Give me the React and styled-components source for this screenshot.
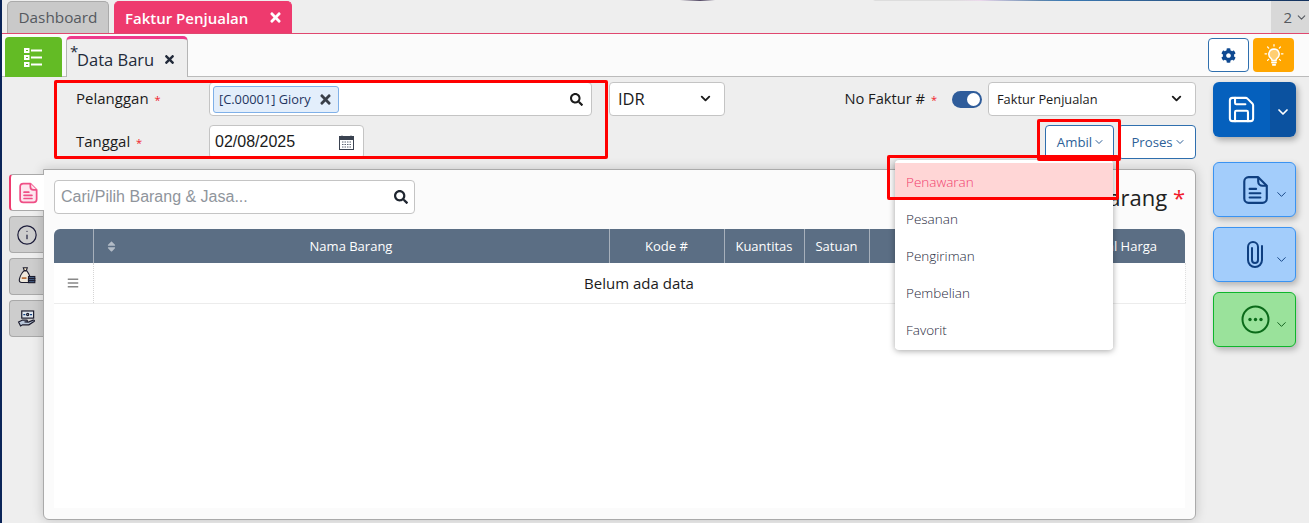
import { createGlobalStyle, styled } from 'styled-components'
import { ChevronDown, Info, Save } from 'lucide-react'
import { FaBars, FaCog, FaSearch, FaSort, FaTimes } from 'react-icons/fa'

const MENU_ITEMS = ['Penawaran', 'Pesanan', 'Pengiriman', 'Pembelian', 'Favorit']

const ListIcon = () => (
  <svg width="22" height="22" viewBox="0 0 22 22" fill="none" stroke="#fff" strokeWidth="2">
    <rect x="2" y="3" width="3.5" height="3" />
    <rect x="2" y="10" width="3.5" height="3" />
    <rect x="2" y="17" width="3.5" height="3" />
    <path d="M8 4.5h11M8 11.5h11M8 18.5h11" />
  </svg>
)

const BulbIcon = () => (
  <svg width="22" height="24" viewBox="0 0 22 24" fill="none" stroke="#fff" strokeWidth="1.2" strokeLinecap="round">
    <path d="M11 6a5.2 5.2 0 0 0-3 9.4c.7.6 1 1.3 1 2.1h4c0-.8.3-1.5 1-2.1A5.2 5.2 0 0 0 11 6z" fill="rgba(255,255,255,0.45)" strokeWidth="1.5" />
    <path d="M9 19.5h4M9.8 21.8h2.4" strokeWidth="1.8" />
    <path d="M11 1.5v1.6M4.6 4l1.1 1.1M17.4 4l-1.1 1.1M2 10.8h1.6M18.4 10.8H20M4.6 17.4l1-1M17.4 17.4l-1-1" />
  </svg>
)

const CalendarIcon = () => (
  <svg width="15" height="15" viewBox="0 0 15 15" fill="none">
    <rect x="0.5" y="1.5" width="14" height="13" fill="#fff" stroke="#3a4250" />
    <rect x="0.5" y="1.5" width="14" height="3.5" fill="#3a4250" />
    <path d="M3 0.5v2M12 0.5v2" stroke="#3a4250" />
    <path d="M3 7h9M3 9.5h9M3 12h9" stroke="#5a6270" strokeDasharray="1.5 1" />
  </svg>
)

const DocIcon = ({ size, color, fill, width }) => (
  <svg width={size} height={size} viewBox="0 0 28 28" fill={fill} stroke={color} strokeWidth={width} strokeLinejoin="round">
    <path d="M8 2h9l8 8v12a4 4 0 0 1-4 4H8a4 4 0 0 1-4-4V6a4 4 0 0 1 4-4z" />
    <path d="M17 2v4a4 4 0 0 0 4 4h4" />
    <path d="M9 13h6M9 17h10M9 21h10" strokeLinecap="round" />
  </svg>
)

const ClipIcon = () => (
  <svg width="18" height="29" viewBox="0 0 18 29" fill="none" stroke="#0f3f80" strokeWidth="2" strokeLinecap="round">
    <path d="M16 6v14a7 7 0 0 1-14 0V7a5 5 0 0 1 10 0v13a3 3 0 0 1-6 0V8" />
  </svg>
)

const DotsIcon = () => (
  <svg width="29" height="29" viewBox="0 0 29 29" fill="none">
    <circle cx="14.5" cy="14.5" r="13" stroke="#0b6b1a" strokeWidth="2" />
    <circle cx="9" cy="14.5" r="1.7" fill="#0b6b1a" />
    <circle cx="14.5" cy="14.5" r="1.7" fill="#0b6b1a" />
    <circle cx="20" cy="14.5" r="1.7" fill="#0b6b1a" />
  </svg>
)

const BagIcon = () => (
  <svg width="19" height="21" viewBox="0 0 24 26" fill="none" stroke="#1c1c2e" strokeWidth="1.4">
    <path d="M8 2h5l-1.2 3.5H9.2z" fill="#f6e7c8" />
    <path d="M8.6 6h4L15 10c1.5 1.5 1 5 1 7v3.5H6c-2.5 0-3.5-1.5-3-4 .5-2.5 3-8.5 5.6-10.5z" fill="#efe9dc" />
    <rect x="14.5" y="13" width="8" height="2.6" fill="#46628a" />
    <rect x="14.5" y="15.6" width="8" height="2.6" fill="#46628a" />
    <rect x="14.5" y="18.2" width="8" height="2.6" fill="#46628a" />
    <path d="M6 15h6" stroke="#b0622a" strokeWidth="2" />
  </svg>
)

const HandIcon = () => (
  <svg width="19" height="19" viewBox="0 0 24 24" fill="none" stroke="#1c1c2e" strokeWidth="1.5">
    <rect x="6" y="2.5" width="15" height="9" fill="#dfe6ee" />
    <path d="M8 7h2.5M16.5 7H19" stroke="#0f3f80" />
    <circle cx="13.5" cy="7" r="1.4" fill="#9aa9bc" />
    <path d="M2 16.5l5-2.5h5c1.5 0 1.5 2.2 0 2.2H9.5l5 .3 6-2.5c1.5-.4 2 1 1 1.7L15 20H7l-2.500 1.500z" fill="#b9c7da" />
  </svg>
)

const App = () => (
  <Page>
    <GlobalStyle />

    <TabBar>
      <AppTab>Dashboard</AppTab>
      <AppTab $active>
        Faktur Penjualan
        <FaTimes size={15} />
      </AppTab>
      <TabCount>
        2
        <ChevronDown size={13} />
      </TabCount>
    </TabBar>

    <SubBar>
      <ListButton>
        <ListIcon />
      </ListButton>
      <DocTab>
        <DocStar>*</DocStar>
        Data Baru
        <FaTimes size={13} />
      </DocTab>
      <SubActions>
        <GearButton>
          <FaCog size={15} />
        </GearButton>
        <BulbButton>
          <BulbIcon />
        </BulbButton>
      </SubActions>
    </SubBar>

    <Main>
      <Content>
        <FormArea>
          <FormRow>
            <FieldLabel>
              Pelanggan <LabelStar>*</LabelStar>
            </FieldLabel>
            <CustomerInput>
              <Tag>
                [C.00001] Giory
                <FaTimes size={15} />
              </Tag>
              <FaSearch size={13} />
            </CustomerInput>
            <CurrencySelect>
              IDR
              <ChevronDown size={15} strokeWidth={3} />
            </CurrencySelect>
            <NumberLabel>
              No Faktur # <LabelStar>*</LabelStar>
            </NumberLabel>
            <Toggle />
            <TypeSelect>
              Faktur Penjualan
              <ChevronDown size={15} strokeWidth={3} />
            </TypeSelect>
          </FormRow>
          <FormRow>
            <FieldLabel>
              Tanggal <LabelStar>*</LabelStar>
            </FieldLabel>
            <DateInput>
              02/08/2025
              <CalendarIcon />
            </DateInput>
            <RowButtons>
              <MenuAnchor>
                <OutlineButton $wide={69}>
                  Ambil
                  <ChevronDown size={12} />
                </OutlineButton>
                <Menu>
                  {MENU_ITEMS.map((item, idx) => (
                    <MenuItem key={item} $active={idx === 0}>
                      {item}
                    </MenuItem>
                  ))}
                </Menu>
              </MenuAnchor>
              <OutlineButton $wide={78}>
                Proses
                <ChevronDown size={12} />
              </OutlineButton>
            </RowButtons>
          </FormRow>
        </FormArea>

        <PanelZone>
          <SideTabs>
            <SideTab $active>
              <DocIcon size={22} color="#ef4f86" fill="#fde6ef" width={2.2} />
            </SideTab>
            <SideTab>
              <Info size={22} color="#1c1c3a" strokeWidth={1.3} />
            </SideTab>
            <SideTab>
              <BagIcon />
            </SideTab>
            <SideTab>
              <HandIcon />
            </SideTab>
          </SideTabs>

          <Panel>
            <PanelHead>
              <ItemSearch>
                Cari/Pilih Barang &amp; Jasa...
                <FaSearch size={14} />
              </ItemSearch>
              <PanelTitle>
                Barang <Required>*</Required>
              </PanelTitle>
            </PanelHead>
            <TableArea>
              <ItemTable>
                <colgroup>
                  <col width="39" />
                  <col width="516" />
                  <col width="115" />
                  <col width="80" />
                  <col width="65" />
                  <col width="166" />
                  <col width="150" />
                </colgroup>
                <thead>
                  <tr>
                    <HeadCell />
                    <HeadCell>
                      <SortMark>
                        <FaSort size={13} />
                      </SortMark>
                      Nama Barang
                    </HeadCell>
                    <HeadCell>Kode #</HeadCell>
                    <HeadCell>Kuantitas</HeadCell>
                    <HeadCell>Satuan</HeadCell>
                    <HeadCell />
                    <HeadCell>Total Harga</HeadCell>
                  </tr>
                </thead>
                <tbody>
                  <tr>
                    <GripCell>
                      <FaBars size={12} />
                    </GripCell>
                    <EmptyCell colSpan={6}>Belum ada data</EmptyCell>
                  </tr>
                </tbody>
              </ItemTable>
            </TableArea>
          </Panel>
        </PanelZone>
      </Content>

      <ActionColumn>
        <SaveButton>
          <SaveMain>
            <Save size={31} strokeWidth={1.6} />
          </SaveMain>
          <SaveCaret>
            <ChevronDown size={16} strokeWidth={2.6} />
          </SaveCaret>
        </SaveButton>
        <ActionStack>
          <ActionButton>
            <DocIcon size={30} color="#0f3f80" fill="none" width={2} />
            <ActionCaret color="#0f3f80" />
          </ActionButton>
          <ActionButton>
            <ClipIcon />
            <ActionCaret color="#0f3f80" />
          </ActionButton>
          <ActionButton $green>
            <DotsIcon />
            <ActionCaret color="#0b5a18" />
          </ActionButton>
        </ActionStack>
      </ActionColumn>
    </Main>

    <FormFrame />
    <AmbilFrame />
    <MenuFrame />
  </Page>
)

export default App

const GlobalStyle = createGlobalStyle`
  html,
  body {
    margin: 0;
    overflow: hidden;
  }

  * {
    box-sizing: border-box;
  }
`

const Page = styled.div`
  position: relative;
  width: 1309px;
  height: 523px;
  overflow: hidden;
  background: #eee;
  border-left: 2px solid #0a2458;
  font-family: 'Open Sans', 'Liberation Sans', sans-serif;
  color: #1b1b1b;
`

const TabBar = styled.div`
  display: flex;
  align-items: flex-end;
  height: 34px;
  padding-left: 5px;
  border-bottom: 1px solid #e0476f;
  background:
    linear-gradient(
        90deg,
        transparent 678px,
        #554a66 698px,
        transparent 713px,
        transparent 871px,
        #ddd 873px,
        #ddd 953px,
        #ecd9ec 978px,
        #5f86ad 1038px,
        #3a7ab5 1063px,
        #35699d 1118px,
        #12305c 1307px
      )
      top / 100% 1px no-repeat,
    #eee;
`

const AppTab = styled.div`
  display: flex;
  align-items: center;
  justify-content: ${(p) => (p.$active ? 'flex-start' : 'center')};
  gap: 20px;
  width: ${(p) => (p.$active ? '178px' : '102px')};
  height: 32px;
  margin-right: 5px;
  padding: ${(p) => (p.$active ? '0 0 0 10px' : '0 0 2px')};
  border: 1px solid ${(p) => (p.$active ? '#ee3a6e' : '#aaa')};
  border-bottom: 0;
  border-radius: 5px 5px 0 0;
  background: ${(p) => (p.$active ? '#ee3a6e' : '#c9c9c9')};
  color: ${(p) => (p.$active ? '#fff' : '#55595f')};
  font-size: ${(p) => (p.$active ? '15px' : '15.3px')};
  font-weight: ${(p) => (p.$active ? 600 : 400)};
`

const TabCount = styled.div`
  display: flex;
  align-items: center;
  justify-content: flex-end;
  gap: 3px;
  width: 38px;
  height: 32px;
  margin-left: auto;
  padding-right: 1px;
  background: #d8d8d8;
  color: #55595f;
  font-size: 15px;
`

const SubBar = styled.div`
  display: flex;
  align-items: flex-end;
  height: 43px;
  padding-left: 3px;
  border-bottom: 1px solid #bbb;
  background: #fbfbfb;
`

const ListButton = styled.div`
  display: flex;
  align-items: center;
  justify-content: center;
  width: 57px;
  height: 40px;
  margin-bottom: -1px;
  border-radius: 4px 4px 0 0;
  background: #63bb25;
`

const DocTab = styled.div`
  position: relative;
  display: flex;
  align-items: center;
  gap: 9px;
  width: 122px;
  height: 41px;
  margin-bottom: -1px;
  margin-left: 4px;
  padding: 2px 0 0 10px;
  border: 1px solid #b5b5b5;
  border-top: 3px solid #ee3a8c;
  border-bottom: 0;
  border-radius: 5px 5px 0 0;
  background: #eee;
  font-size: 16.5px;
  color: #222a3a;
`

const DocStar = styled.span`
  position: absolute;
  top: 2px;
  left: 3px;
  font-size: 15px;
`

const SubActions = styled.div`
  display: flex;
  align-self: flex-start;
  gap: 4px;
  margin: 4px 15px 0 auto;
`

const GearButton = styled.div`
  display: flex;
  align-items: center;
  justify-content: center;
  width: 41px;
  height: 34px;
  border: 1px solid #2f6fae;
  border-radius: 4px;
  background: #fff;
  color: #0f4a92;
`

const BulbButton = styled.div`
  display: flex;
  align-items: center;
  justify-content: center;
  width: 41px;
  height: 34px;
  border-radius: 4px;
  background: #ffa600;
`

const Main = styled.div`
  display: flex;
`

const Content = styled.div`
  display: flex;
  flex-direction: column;
  width: 1194px;
`

const FormArea = styled.div`
  display: flex;
  flex-direction: column;
  gap: 9px;
  height: 92px;
  padding: 5px 0 0 74px;
`

const FormRow = styled.div`
  display: flex;
  align-items: center;
  height: 34px;
`

const FieldLabel = styled.div`
  width: 133px;
  padding-bottom: 2px;
  font-size: 15px;
`

const Required = styled.span`
  color: #f01c2c;
`

const LabelStar = styled(Required)`
  margin-left: 2px;
  font-size: 11px;
`

const CustomerInput = styled.div`
  display: flex;
  align-items: center;
  justify-content: space-between;
  width: 383px;
  height: 34px;
  padding: 0 8px 0 3px;
  border: 1px solid #c4c4c4;
  border-radius: 4px;
  background: #fff;
`

const Tag = styled.div`
  display: flex;
  align-items: center;
  gap: 7px;
  height: 27px;
  padding: 0 5px;
  border: 1px solid #7fb0e8;
  border-radius: 3px;
  background: #e3eefb;
  color: #1f3560;
  font-size: 12.8px;

  svg {
    color: #3a3f48;
  }
`

const SelectBox = styled.div`
  display: flex;
  align-items: center;
  justify-content: space-between;
  height: 34px;
  padding-bottom: 1px;
  border: 1px solid #c4c4c4;
  border-radius: 4px;
  background: #fff;
`

const CurrencySelect = styled(SelectBox)`
  width: 116px;
  margin-left: 17px;
  padding: 0 11px 1px 8px;
  font-size: 16.5px;
`

const NumberLabel = styled.div`
  margin-left: auto;
  padding-bottom: 2px;
  font-size: 14.7px;
`

const Toggle = styled.div`
  position: relative;
  width: 30px;
  height: 17px;
  margin: 0 6px 0 15px;
  border-radius: 9px;
  background: #2f5c9a;

  &::after {
    content: '';
    position: absolute;
    top: 2px;
    right: 2px;
    width: 13px;
    height: 13px;
    border-radius: 50%;
    background: #fff;
  }
`

const TypeSelect = styled(SelectBox)`
  width: 208px;
  padding: 0 11px 1px 8px;
  font-size: 12.8px;
`

const DateInput = styled.div`
  display: flex;
  align-items: center;
  justify-content: space-between;
  width: 155px;
  height: 34px;
  padding: 0 9px 0 5px;
  border: 1px solid #c4c4c4;
  border-radius: 4px;
  background: #fff;
  font-family: 'Liberation Sans', sans-serif;
  font-size: 16px;
`

const RowButtons = styled.div`
  display: flex;
  gap: 4px;
  margin-left: auto;
`

const MenuAnchor = styled.div`
  position: relative;
`

const OutlineButton = styled.div`
  display: flex;
  align-items: center;
  justify-content: center;
  gap: 1px;
  width: ${(p) => p.$wide}px;
  height: 34px;
  padding-left: 3px;
  border: 1px solid #2f6fae;
  border-radius: 4px;
  background: #fff;
  color: #2d5f98;
  font-size: 13.2px;
`

const Menu = styled.div`
  position: absolute;
  z-index: 5;
  top: 35px;
  right: 1px;
  width: 218px;
  height: 190px;
  padding-top: 3px;
  border-radius: 4px;
  background: #fff;
  box-shadow: 0 1px 6px rgba(0, 0, 0, 0.35);
`

const MenuItem = styled.div`
  display: flex;
  align-items: center;
  height: 37px;
  padding-left: 11px;
  background: ${(p) => (p.$active ? '#ffd6d6' : '#fff')};
  color: ${(p) => (p.$active ? '#f0406e' : '#1f2a3c')};
  font-size: 13.5px;
  font-weight: 300;
`

const PanelZone = styled.div`
  display: flex;
  padding-left: 7px;
`

const SideTabs = styled.div`
  display: flex;
  flex-direction: column;
  gap: 5px;
  width: 34px;
  padding-top: 5px;
`

const SideTab = styled.div`
  position: relative;
  z-index: ${(p) => (p.$active ? 2 : 0)};
  display: flex;
  align-items: center;
  justify-content: center;
  width: ${(p) => (p.$active ? '35px' : '34px')};
  height: 37px;
  border: 1px solid #a9a9a9;
  border-left: ${(p) => (p.$active ? '2px solid #ee3a6e' : '1px solid #a9a9a9')};
  border-right: 0;
  border-radius: 4px 0 0 4px;
  background: ${(p) => (p.$active ? '#fff' : '#cdcdcd')};
`

const Panel = styled.div`
  position: relative;
  z-index: 1;
  display: flex;
  flex-direction: column;
  width: 1153px;
  height: 351px;
  padding: 10px 10px 11px;
  border: 1px solid #aaa;
  border-radius: 0 6px 6px 6px;
  background: #fbfbfb;
  box-shadow: 0 0 12px rgba(0, 0, 0, 0.18);
`

const PanelHead = styled.div`
  display: flex;
  align-items: center;
  justify-content: space-between;
  height: 34px;
  margin-bottom: 15px;
`

const ItemSearch = styled.div`
  display: flex;
  align-items: center;
  justify-content: space-between;
  width: 361px;
  height: 34px;
  padding: 0 6px;
  border: 1px solid #c4c4c4;
  border-radius: 4px;
  background: #fff;
  color: #8f959c;
  font-family: 'Liberation Sans', sans-serif;
  font-size: 16px;

  svg {
    color: #1f2630;
  }
`

const PanelTitle = styled.div`
  font-size: 22px;
  color: #222;
`

const TableArea = styled.div`
  flex: 1;
  background: #fff;
`

const ItemTable = styled.table`
  width: 100%;
  border-collapse: collapse;
  table-layout: fixed;
`

const HeadCell = styled.th`
  position: relative;
  height: 34px;
  padding: 0;
  border-left: 1px solid #a7b0bb;
  background: #5b6e84;
  color: #fff;
  font-size: 13px;
  font-weight: 500;
  white-space: nowrap;

  &:first-child {
    border-left: 0;
    border-top-left-radius: 6px;
  }

  &:last-child {
    padding-right: 28px;
    border-left: 0;
    border-top-right-radius: 6px;
    text-align: right;
  }
`

const SortMark = styled.span`
  position: absolute;
  top: 10px;
  left: 11px;
  color: #b3bcc7;
`

const GripCell = styled.td`
  height: 40px;
  border-right: 1px dotted #d5d5d5;
  border-bottom: 1px solid #ececec;
  color: #888;
  text-align: center;
`

const EmptyCell = styled.td`
  border-right: 1px dotted #e0e0e0;
  border-bottom: 1px solid #ececec;
  font-size: 15px;
  text-align: center;
`

const ActionColumn = styled.div`
  display: flex;
  flex-direction: column;
  padding: 5px 0 0 17px;
`

const SaveButton = styled.div`
  display: flex;
  width: 83px;
  height: 55px;
  overflow: hidden;
  border-radius: 6px;
  box-shadow: 2px 3px 6px rgba(0, 0, 0, 0.3);
  color: #fff;
`

const SaveMain = styled.div`
  display: flex;
  flex: 1;
  align-items: center;
  justify-content: center;
  background: #0560bd;
`

const SaveCaret = styled.div`
  display: flex;
  align-items: center;
  justify-content: center;
  width: 26px;
  padding-top: 4px;
  background: #0b52a0;
`

const ActionStack = styled.div`
  display: flex;
  flex-direction: column;
  gap: 10px;
  margin-top: 25px;
`

const ActionButton = styled.div`
  display: grid;
  grid-template-columns: 30px 15px;
  column-gap: 4px;
  align-items: center;
  justify-items: center;
  width: 83px;
  height: 55px;
  padding-left: 26px;
  border: 1px solid ${(p) => (p.$green ? '#0fb52c' : '#3a93f2')};
  border-radius: 6px;
  background: ${(p) => (p.$green ? '#9ae29b' : '#a3cdfb')};
  box-shadow: 2px 3px 6px rgba(0, 0, 0, 0.25);
`

const ActionCaret = styled(ChevronDown).attrs({ size: 15, strokeWidth: 1.5 })`
  margin-top: 9px;
`

// the red boxes are drawn over the screen as annotations
const RedFrame = styled.div`
  position: absolute;
  z-index: 10;
  border: 3px solid #f00;
  border-radius: 2px;
  pointer-events: none;
`

const FormFrame = styled(RedFrame)`
  top: 80px;
  left: 52px;
  width: 554px;
  height: 79px;
`

const AmbilFrame = styled(RedFrame)`
  top: 119px;
  left: 1035px;
  width: 84px;
  height: 42px;
`

const MenuFrame = styled(RedFrame)`
  top: 155px;
  left: 885px;
  width: 232px;
  height: 45px;
`
